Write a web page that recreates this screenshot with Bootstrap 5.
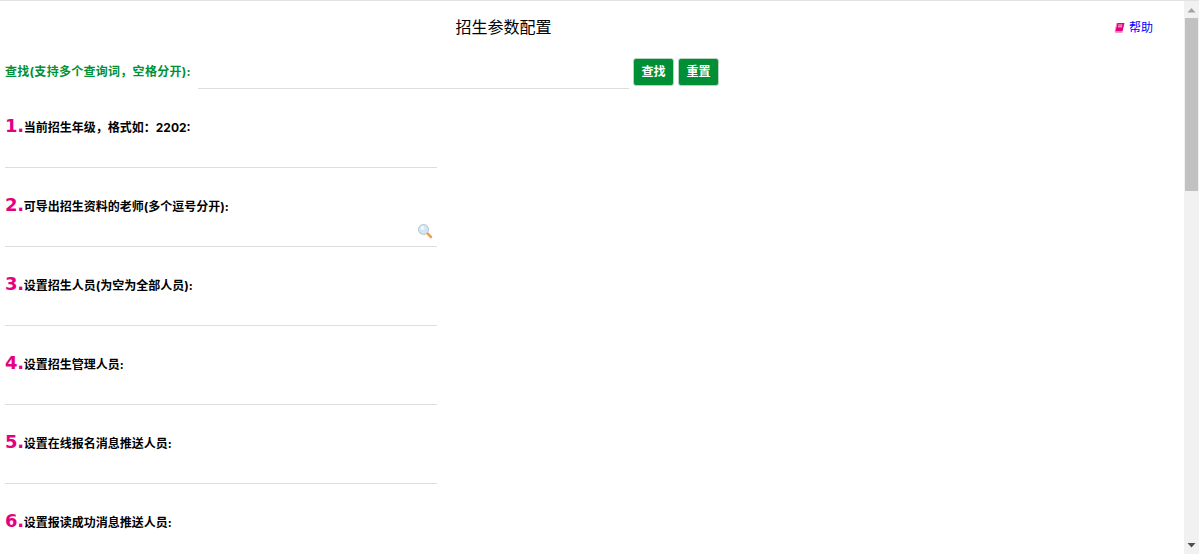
<!DOCTYPE html>
<html lang="zh-CN">
<head>
  <meta charset="UTF-8">
  <title>招生参数配置</title>
  <link href="https://cdn.jsdelivr.net/npm/bootstrap@5.3.3/dist/css/bootstrap.min.css" rel="stylesheet">
  <style>
    body {
      background: #fff;
      border-top: 1px solid #e2e2e2;
      color: #000;
      font-family: "Inter", "Noto Sans CJK SC", sans-serif;
      font-size: 12px;
      height: 100vh;
      overflow: hidden;
    }
    .page-head {
      height: 52px;
      padding-right: 46px;
    }
    .page-title {
      font-size: 16px;
      font-weight: 400;
      margin: 0;
      width: 1007px;
      text-align: center;
      font-family: "Noto Sans CJK SC", sans-serif;
    }
    .help-link {
      color: #00f;
      text-decoration: none;
      margin-left: auto;
      font-family: "Noto Sans CJK SC", sans-serif;
    }
    .search-bar {
      height: 36px;
      padding-left: 5px;
    }
    .search-label {
      color: #009036;
      font-weight: 700;
      white-space: nowrap;
      width: 193px;
      margin-top: 1px;
      letter-spacing: .28px;
    }
    .line-input {
      border: 0;
      border-bottom: 1px solid #ddd;
      border-radius: 0;
      padding: 0 20px 0 0;
      height: 28px;
      min-height: 0;
      font-size: 12px;
      box-shadow: none;
      background: transparent;
    }
    .search-input {
      width: 431px;
      height: 36px;
    }
    .btn-green {
      background: #008f36;
      border: 1px solid #b9d3c2;
      border-radius: 3px;
      color: #fff;
      font-size: 12px;
      font-weight: 700;
      height: 28px;
      width: 41px;
      padding: 0;
      margin-top: 1px;
      line-height: 1;
    }
    .setting-list {
      padding-left: 5px;
    }
    .setting-item {
      width: 432px;
      height: 79px;
      padding-top: 22px;
    }
    .setting-label {
      display: block;
      font-weight: 700;
      margin: 0;
      height: 29px;
      line-height: 29px;
      white-space: nowrap;
    }
    .setting-no {
      color: #e4007f;
      font-family: "DejaVu Sans", sans-serif;
      font-size: 18px;
      font-weight: 700;
      letter-spacing: -.3px;
    }
    .pick-icon {
      position: absolute;
      right: 4px;
      top: 4px;
    }
    .fake-scroll {
      position: fixed;
      top: 1px;
      right: 0;
      bottom: 0;
      width: 15px;
      background: #f1f1f1;
    }
    .fake-scroll-thumb {
      height: 173px;
      margin: 0 1px;
      background: #c1c1c1;
    }
    .fake-scroll-arrow {
      height: 17px;
    }
  </style>
</head>
<body>

<div class="page-head d-flex align-items-center">
  <h1 class="page-title">招生参数配置</h1>
  <a class="help-link d-flex align-items-center gap-1" href="#">
    <svg width="11" height="11" viewBox="0 0 11 11">
      <path d="M3 1h7.500L8.500 9.500H1z" fill="#e4007f"/>
      <path d="M1 9.500L3 1M1.200 10.400h7.300" stroke="#f58cc4" fill="none"/>
      <path d="M4.300 3h4M4 4.800h4" stroke="#ffc4e4"/>
    </svg>
    帮助
  </a>
</div>

<form class="search-bar d-flex align-items-center" onsubmit="return false">
  <label class="search-label" for="keyword">查找(支持多个查询词，空格分开):</label>
  <input class="form-control line-input search-input" id="keyword" type="text">
  <button class="btn btn-green ms-1" type="submit">查找</button>
  <button class="btn btn-green ms-1" type="reset">重置</button>
</form>

<div class="setting-list" id="settings"></div>

<div class="fake-scroll d-flex flex-column">
  <svg class="fake-scroll-arrow" width="15" height="17" viewBox="0 0 15 17"><path d="M7.500 7L11.500 11.500H3.500z" fill="#a3a3a3"/></svg>
  <div class="fake-scroll-thumb"></div>
  <svg class="fake-scroll-arrow mt-auto" width="15" height="17" viewBox="0 0 15 17"><path d="M7.500 10.500L3.500 6H11.500z" fill="#505050"/></svg>
</div>

<script>
  const settings = [
    "当前招生年级，格式如：2202:",
    "可导出招生资料的老师(多个逗号分开):",
    "设置招生人员(为空为全部人员):",
    "设置招生管理人员:",
    "设置在线报名消息推送人员:",
    "设置报读成功消息推送人员:"
  ];
  const icon = '<svg class="pick-icon" width="16" height="16" viewBox="0 0 16 16">' +
    '<path d="M9.500 9.500L14 14" stroke="#f0a050" stroke-width="2.500" stroke-linecap="round"/>' +
    '<circle cx="6.500" cy="6.500" r="5" fill="#cfe6f7" stroke="#b8c4cc"/>' +
    '<circle cx="5.500" cy="5" r="2" fill="#f0f8ff"/></svg>';
  document.getElementById("settings").innerHTML = settings.map(function(text, i) {
    return '<div class="setting-item">' +
      '<label class="setting-label"><span class="setting-no">' + (i + 1) + '.</span>' + text + '</label>' +
      '<div class="position-relative"><input class="form-control line-input" type="text">' +
      (i === 1 ? icon : '') + '</div></div>';
  }).join("");
</script>

<script src="https://cdn.jsdelivr.net/npm/bootstrap@5.3.3/dist/js/bootstrap.bundle.min.js"></script>
</body>
</html>
